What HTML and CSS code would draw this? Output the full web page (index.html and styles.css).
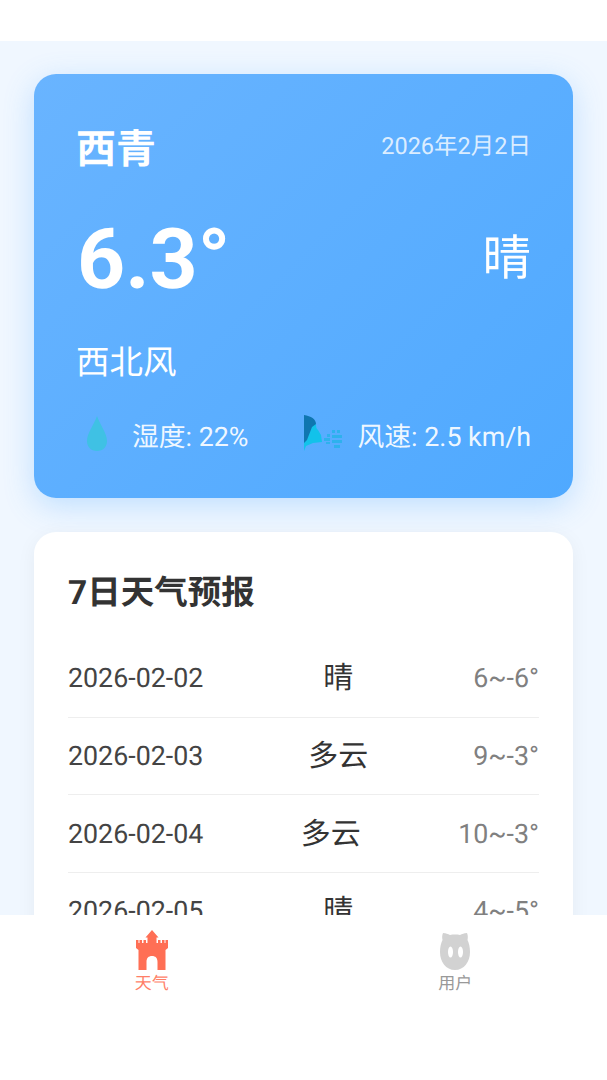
FILE: index.html
```html
<!DOCTYPE html>
<html lang="zh-CN">
<head>
<meta charset="utf-8">
<title>天气</title>
<link rel="stylesheet" href="styles.css">
</head>
<body>
<div class="app">
  <div class="topbar"></div>
  <main class="content">
    <section class="hero">
      <div class="hero-head">
        <span class="city">西青</span>
        <span class="date">2026年2月2日</span>
      </div>
      <div class="hero-main">
        <span class="temp">6.3°</span>
        <span class="cond">晴</span>
      </div>
      <div class="wind-dir">西北风</div>
      <div class="stats">
        <div class="stat">
          <svg class="stat-icon" viewBox="-1 0 40 40"><path fill="#3fc1e4" d="M20 2C17 11 10 19 10 27c0 6 4 10 10 10s10-4 10-10C30 19 23 11 20 2z"/></svg>
          <span>湿度: 22%</span>
        </div>
        <div class="stat">
          <svg class="stat-icon" viewBox="-1 0 40 40"><path fill="#12c2ea" d="M13 10c0 4 1 5 2 6l3 5 1 7-9 1-7 3-2 5V28l3-3 4-14z"/><path fill="#0f76b0" d="M1 1c7 1 12 4 12 9l-4 3-5 13-3 3z"/><g fill="#27b3ea" opacity=".85"><rect x="24" y="20" width="3" height="3"/><rect x="29" y="16" width="3" height="3"/><rect x="34" y="16" width="3" height="3"/><rect x="21" y="24" width="6" height="3"/><rect x="29" y="21" width="10" height="3"/><rect x="29" y="26" width="10" height="3"/><rect x="23" y="28" width="4" height="2"/><rect x="31" y="31" width="6" height="3"/></g></svg>
          <span>风速: 2.5 km/h</span>
        </div>
      </div>
    </section>
    <section class="forecast">
      <h2 class="forecast-title">7日天气预报</h2>
      <div class="row"><span class="row-date">2026-02-02</span><span class="row-cond">晴</span><span class="row-temp">6~-6°</span></div>
      <div class="row"><span class="row-date">2026-02-03</span><span class="row-cond">多云</span><span class="row-temp">9~-3°</span></div>
      <div class="row"><span class="row-date">2026-02-04</span><span class="row-cond">多云</span><span class="row-temp">10~-3°</span></div>
      <div class="row"><span class="row-date">2026-02-05</span><span class="row-cond">晴</span><span class="row-temp">4~-5°</span></div>
    </section>
  </main>
  <nav class="tabbar">
    <div class="tab tab-active">
      <svg class="tab-icon" viewBox="0 0 32 40"><path fill="#ff6f55" d="M16 0L22.500 7.500H20.500V13H22V10H24.500V13H26V10H28.500V13H29.500V10H32V18L29.500 20V40H21.500V32C21.500 28 19.500 26 16 26C12.500 26 10.500 28 10.500 32V40H2.500V20L0 18V10H2.500V13H3.500V10H6V13H7.500V10H10V13H11.500V7.500H9.500Z"/></svg>
      <span>天气</span>
    </div>
    <div class="tab">
      <svg class="tab-icon tab-icon-user" viewBox="0 0 30 38"><path fill="#d2d2d2" d="M3 1c3 0 5 1 7 2 3-.6 7-.6 10 0 2-1 4-2 7-2 1 2 1 5 .5 7C29 11 30 15 30 20c0 10-6 18-15 18S0 30 0 20c0-5 1-9 2.500-12C2 6 2 3 3 1z"/><ellipse cx="10.500" cy="20" rx="2.500" ry="5.500" fill="#fff"/><ellipse cx="20.500" cy="20" rx="2.500" ry="5.500" fill="#fff"/></svg>
      <span>用户</span>
    </div>
  </nav>
</div>
</body>
</html>
```
FILE: styles.css
```css
* { box-sizing: border-box; margin: 0; padding: 0; }
html, body { height: 100%; }
body {
  background: #fff;
  font-family: Roboto, "Noto Sans CJK SC", sans-serif;
  color: #333;
  text-rendering: geometricPrecision;
}
.app { display: flex; flex-direction: column; height: 1080px; overflow: hidden; }
.topbar { height: 41px; flex: none; background: #fff; }
.content {
  height: 874px;
  flex: none;
  overflow: hidden;
  padding: 33px 34px 0;
  background: #f0f7ff;
}
.hero {
  height: 424px;
  padding: 44px 42px 0;
  border-radius: 22px;
  color: #fff;
  background: linear-gradient(135deg, #69b4ff, #4fa9ff);
  box-shadow: 0 8px 30px rgba(78, 168, 255, 0.3);
}
.hero-head { display: flex; justify-content: space-between; align-items: center; height: 60px; }
.city { font-size: 40px; font-weight: 700; line-height: 60px; padding-top: 3px; }
.date { font-size: 23.5px; padding-bottom: 8px; color: rgba(255, 255, 255, 0.8); }
.hero-main { display: flex; justify-content: space-between; align-items: center; margin-top: 37px; height: 90px; }
.temp { font-size: 84px; font-weight: 700; line-height: 90px; margin-left: 1px; }
.cond { font-size: 48.500px; padding-bottom: 12px; }
.wind-dir { font-size: 33.5px; line-height: 48px; margin-top: 35px; }
.stats { display: flex; justify-content: space-between; align-items: center; margin-top: 26px; height: 40px; }
.stat { display: flex; align-items: center; gap: 16px; font-size: 26.8px; color: rgba(255, 255, 255, 0.92); }
.stat-icon { width: 40px; height: 40px; flex: none; }
.forecast {
  margin-top: 34px;
  padding: 36px 34px 0;
  height: 600px;
  border-radius: 22px;
  background: #fff;
  box-shadow: 0 4px 20px rgba(0, 0, 0, 0.05);
}
.forecast-title { font-size: 33.5px; font-weight: 700; line-height: 52px; margin-bottom: 20px; color: #333; }
.row {
  display: flex;
  justify-content: space-between;
  align-items: center;
  height: 77.67px;
  border-bottom: 1px solid #eee;
  font-size: 26.8px;
}
.row-date { color: #444; }
.row-cond { font-size: 30px; padding-bottom: 6px; color: #333; }
.row-temp { color: #808080; }
.tabbar { flex: 1; display: flex; background: #fff; padding-top: 15px; }
.tab { flex: 1; display: flex; flex-direction: column; align-items: center; font-size: 17px; line-height: 22px; color: #999; }
.tab-active { color: #ff7f68; }
.tab-icon { width: 32px; height: 40px; margin-bottom: 3px; }
.tab-icon-user { width: 30px; height: 38px; margin: 2px 0 3px; }
```
